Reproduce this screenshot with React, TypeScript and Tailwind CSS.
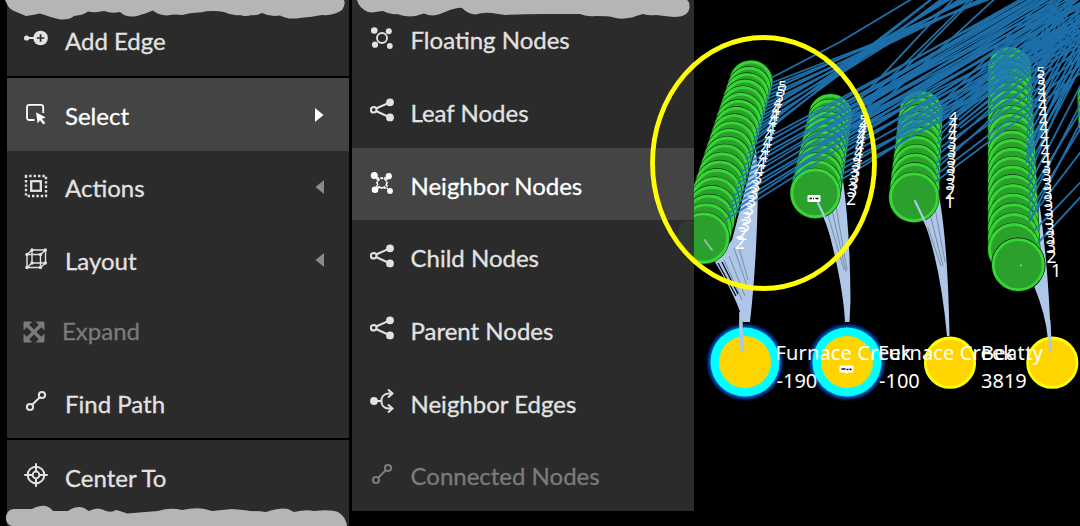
import React from "react";

type IconName =
  | "addEdge" | "select" | "actions" | "layout" | "expand" | "path" | "target"
  | "floating" | "share" | "neighbor" | "edges";

function Icon({ name }: { name: IconName }) {
  const line = { fill: "none", stroke: "currentColor", strokeWidth: 2 };
  const dot = (x: number, y: number, r: number) => <circle cx={x} cy={y} r={r} fill="currentColor" />;
  return (
    <svg viewBox="0 0 24 24" className="size-6 shrink-0">
      {name === "addEdge" && (
        <g>
          {dot(2.6, 12, 2.6)}
          <path d="M2 12h10" {...line} />
          {dot(16.6, 12, 7.3)}
          <path d="M16.600 8.300v7.400M12.900 12h7.400" stroke="#2b2b2b" strokeWidth="1.700" />
        </g>
      )}
      {name === "select" && (
        <g>
          <path d="M10.500 19H5.200A2.200 2.200 0 0 1 3 16.800V6a2.200 2.200 0 0 1 2.200-2.200H17A2.200 2.200 0 0 1 19.200 6v6" {...line} strokeWidth="1.800" />
          <path d="M12 11.200l9.800 5.300-4 1.300 3.500 4.100-1.900 1.600-3.400-4.200-2.300 3.100z" fill="currentColor" />
        </g>
      )}
      {name === "actions" && (
        <g>
          <rect x="2" y="2" width="20" height="20" {...line} strokeWidth="2.400" strokeDasharray="2.400 2" strokeDashoffset="1.200" />
          <rect x="7.200" y="7.200" width="9.600" height="9.600" {...line} strokeWidth="2.300" />
        </g>
      )}
      {name === "layout" && (
        <g>
          <path d="M3 7.500h13.500v13H3zM8 3h13.500v13H8zM3 7.500L8 3M16.500 7.500l5-4.500M3 20.500L8 16M16.500 20.500l5-4.500" {...line} strokeWidth="1.400" />
          {[[3, 7.5], [16.5, 7.5], [3, 20.5], [16.5, 20.5], [8, 3], [21.3, 3], [21.3, 16], [8, 16]].map(([x, y]) => (
            <circle key={`${x}-${y}`} cx={x} cy={y} r="1.700" fill="currentColor" />
          ))}
        </g>
      )}
      {name === "expand" && (
        <g>
          <path d="M5 5l14 14M19 5L5 19" {...line} strokeWidth="3.200" />
          <path d="M2 2h7.500L2 9.500zM22 2v7.500L14.500 2zM2 22v-7.500l7.500 7.500zM22 22h-7.500l7.500-7.500z" fill="currentColor" stroke="currentColor" strokeWidth="1" strokeLinejoin="round" />
        </g>
      )}
      {name === "path" && (
        <g {...line}>
          <circle cx="6" cy="18" r="3.100" />
          <circle cx="18" cy="6" r="3.100" />
          <path d="M8.200 15.800l7.600-7.600" />
        </g>
      )}
      {name === "target" && (
        <g {...line}>
          <circle cx="12" cy="12" r="8.300" />
          <circle cx="12" cy="12" r="3.400" />
          <path d="M12 .3v8.300M12 15.400v8.300M.3 12h8.300M15.400 12h8.300" />
        </g>
      )}
      {name === "floating" && (
        <g>
          {dot(4.3, 4.5, 3.3)}{dot(18.8, 5.2, 3)}{dot(5, 18.7, 3.1)}{dot(19.8, 20, 2.9)}
          <circle cx="12" cy="12" r="5" {...line} strokeWidth="1.900" />
        </g>
      )}
      {name === "neighbor" && (
        <g>
          {dot(4.3, 4.5, 3.5)}{dot(18.8, 5.2, 3.1)}{dot(5, 18.7, 3.3)}{dot(20, 20, 2.9)}
          <circle cx="12" cy="12" r="4.700" {...line} strokeWidth="1.500" strokeDasharray="3 1" />
          <path d="M6 6l3 3M17.500 6.500l-2 2M6.500 17.500l2-2M18 18l-2.500-2.500M7 7V17M17 7V17M7 7H17M7 17H17" {...line} strokeWidth="1.300" strokeDasharray="2 1.500" />
        </g>
      )}
      {name === "share" && (
        <g>
          <circle cx="3.700" cy="11.800" r="2.800" {...line} />
          <path d="M6 10.500L20 4.400M6 13L20 19.500" {...line} />
          {dot(20, 4.3, 3.9)}{dot(20, 19.4, 3.9)}
        </g>
      )}
      {name === "edges" && (
        <g>
          {dot(4, 12, 3.9)}
          <path d="M4 12h8M22 4.500h-3.500C9 5 9 19 18.500 19.500H22" {...line} />
          <path d="M18 .5l4.500 4L18 8.500M18 15.500l4.500 4-4.500 4" {...line} />
        </g>
      )}
    </svg>
  );
}

type Item = { label: string; icon: IconName; row: string; arrow?: "left" | "right" };

const mainItems: Item[] = [
  { label: "Add Edge", icon: "addEdge", row: "h-[73px] pl-[17px] bg-[#2b2b2b] text-[#e2e2e2]" },
  { label: "Select", icon: "select", row: "mt-[2px] h-[73px] pl-[17px] bg-[#444444] text-white", arrow: "right" },
  { label: "Actions", icon: "actions", row: "h-[72.7px] pl-[17px] bg-[#2b2b2b] text-[#e2e2e2]", arrow: "left" },
  { label: "Layout", icon: "layout", row: "h-[72.7px] pl-[17px] bg-[#2b2b2b] text-[#e2e2e2]", arrow: "left" },
  { label: "Expand", icon: "expand", row: "h-[69.6px] pl-[15px] bg-[#2b2b2b] text-[#7b7b7b]" },
  { label: "Find Path", icon: "path", row: "h-[72.5px] pl-[17px] pt-px bg-[#2b2b2b] text-[#e2e2e2]" },
  { label: "Center To", icon: "target", row: "mt-[2px] h-[73px] pl-[17px] bg-[#2b2b2b] text-[#e2e2e2]" },
];

const nodeItems: Item[] = [
  { label: "Floating Nodes", icon: "floating", row: "text-[#e2e2e2]" },
  { label: "Leaf Nodes", icon: "share", row: "text-[#e2e2e2]" },
  { label: "Neighbor Nodes", icon: "neighbor", row: "bg-[#444444] text-white" },
  { label: "Child Nodes", icon: "share", row: "text-[#e2e2e2]" },
  { label: "Parent Nodes", icon: "share", row: "text-[#e2e2e2]" },
  { label: "Neighbor Edges", icon: "edges", row: "text-[#e2e2e2]" },
  { label: "Connected Nodes", icon: "path", row: "text-[#7b7b7b]" },
];

function MainRow({ item }: { item: Item }) {
  const muted = item.icon === "expand";
  return (
    <div className={`flex shrink-0 items-center pr-[25px] ${item.row}`}>
      <div className={muted ? "pt-px" : "pb-[3px]"}><Icon name={item.icon} /></div>
      <span className={muted ? "ml-4 flex-1" : "ml-[17px] flex-1 pt-[2px]"}>{item.label}</span>
      {item.arrow && (
        <svg viewBox="0 0 9 16" className={item.arrow === "right" ? "h-4 w-[9px] text-white" : "h-4 w-[9px] text-[#8a8a8a]"}>
          <path d={item.arrow === "right" ? "M0 1l8.500 7L0 15z" : "M9 1L.5 8 9 15z"} fill="currentColor" />
        </svg>
      )}
    </div>
  );
}

const mix = (a: number, b: number, t: number) => a + (b - a) * t;
const ease = (t: number) => t * 0.8 + t * t * 0.2;

type Stack = { n: number; from: [number, number, number]; to: [number, number, number] };
const stacks: Stack[] = [
  { n: 21, from: [751, 82, 20], to: [703.5, 238, 24.2] },
  { n: 12, from: [830.5, 115.5, 20], to: [815.3, 193.3, 23.5] },
  { n: 11, from: [921, 112.5, 20], to: [914, 197.3, 23.5] },
  { n: 22, from: [1009.5, 68.5, 20], to: [1014, 249, 24.5] },
  { n: 5, from: [1099, 98, 20], to: [1101, 122, 21] },
];

function GreenStack({ n, from, to }: Stack) {
  return (
    <g>
      {Array.from({ length: n }, (_, i) => {
        const e = ease(i / (n - 1));
        const [x, y, r] = [mix(from[0], to[0], e), mix(from[1], to[1], e), mix(from[2], to[2], e)];
        return (
          <g key={i}>
            <circle cx={x} cy={y} r={r + 2.1} fill="#0c340c" />
            <circle cx={x} cy={y} r={r} fill="#2ca02c" stroke="#37d637" strokeWidth="3" />
          </g>
        );
      })}
    </g>
  );
}

type Fan = { n: number; a: [number, number]; b: [number, number]; c: [number, number]; d: [number, number] };
const fans: Fan[] = [
  { n: 15, a: [771, 83], b: [753, 142], c: [1003, -6], d: [938, -6] },
  { n: 13, a: [750, 147], b: [725, 220], c: [1030, -6], d: [1085, -6] },
  { n: 4, a: [852, 108], b: [852, 130], c: [958, -6], d: [1000, -6] },
  { n: 8, a: [840, 105], b: [815, 150], c: [1025, -4], d: [1090, 2] },
  { n: 15, a: [850, 103], b: [839, 181], c: [1042, -6], d: [1090, 40] },
  { n: 13, a: [940, 105], b: [935, 182], c: [1050, -6], d: [1090, 66] },
  { n: 9, a: [898, 118], b: [896, 140], c: [1090, -4], d: [1090, 30] },
  { n: 18, a: [1028, 60], b: [1026, 163], c: [1062, -6], d: [1125, -6] },
  { n: 9, a: [1028, 150], b: [1029, 222], c: [1085, 20], d: [1115, 76] },
  { n: 3, a: [1029, 220], b: [1037, 244], c: [1120, 100], d: [1120, 160] },
  { n: 8, a: [955, 100], b: [960, 128], c: [1085, -6], d: [1100, 20] },
];

const digitsFor = (counts: [string, number][]) => counts.flatMap(([d, k]) => Array.from({ length: k }, () => d));
const labelRuns: { digits: string[]; from: [number, number]; to: [number, number] }[] = [
  { digits: digitsFor([["5", 3], ["4", 11], ["3", 7], ["2", 2]]), from: [778.3, 90.5], to: [735, 249] },
  { digits: digitsFor([["5", 1], ["4", 7], ["3", 5], ["2", 1]]), from: [859.5, 125], to: [846, 204.5] },
  { digits: digitsFor([["4", 4], ["3", 6], ["2", 1], ["1", 1]]), from: [949, 122], to: [944.5, 208] },
  { digits: digitsFor([["5", 3], ["4", 10], ["3", 10], ["2", 1]]), from: [1036.5, 77], to: [1046.5, 263] },
];

function Graph() {
  return (
    <svg viewBox="694 0 386 526" className="h-full w-[386px] shrink-0" fontFamily='"Noto Sans", "Open Sans", sans-serif'>
      <defs>
        <radialGradient id="halo">
          <stop offset="0.840" stopColor="#0090ff" />
          <stop offset="1" stopColor="#0040ff" stopOpacity="0" />
        </radialGradient>
      </defs>
      <g fill="#aec7e8">
        <path d="M756 148L758 185Q757 260 750 322H743Q738 300 715 262L732 240Z" />
        <path d="M843 180Q850 230 850.500 300L849.500 322H845Q843 280 822 206Z" />
        <path d="M939 195Q948 245 949.500 336H947Q940 260 922 216L932 212Z" />
        <path d="M1039 200Q1046 250 1049 300L1051 340H1048Q1046 315 1034 286Z" />
      </g>
      <g stroke="#66758a" strokeWidth="0.700" fill="none">
        <path d="M724 260L742 300M729 256L745 296M734 248L747 286M738 244L748 280M827 212L844 270M832 210L846 272M836 206L847 270M924 216L941 266M930 214L943 266M935 208L945 262" />
      </g>
      <path d="M718 263L736 296M722 262L738 294" stroke="#0a0d12" strokeWidth="1.300" fill="none" />
      {stacks.map((s, i) => <GreenStack key={i} {...s} />)}
      <circle cx="1018.300" cy="264.700" r="27.200" fill="#0c240c" />
      <circle cx="1018.300" cy="264.700" r="25" fill="#2ca02c" stroke="#37d637" strokeWidth="2.800" />
      <g stroke="#2079b8" strokeWidth="1.850" opacity="0.920">
        {fans.map((f, k) =>
          Array.from({ length: f.n }, (_, i) => {
            const t = i / (f.n - 1);
            const w = Math.min(1, Math.max(0, t + (((i * 7 + k * 3) % 5) - 2) * 0.09));
            return (
              <line key={`${k}-${i}`} x1={mix(f.a[0], f.b[0], t)} y1={mix(f.a[1], f.b[1], t)} x2={mix(f.c[0], f.d[0], w)} y2={mix(f.c[1], f.d[1], w)} />
            );
          })
        )}
        <path d="M771 78L840 42L915 -3" fill="none" />
      </g>
      <g stroke="#aec7e8" strokeLinecap="round" fill="none">
        <path d="M704.500 240L712 250" stroke="#96bfa8" strokeWidth="2" />
        <path d="M818 203Q828 222 834 246M915 201L927 226" strokeWidth="2.200" />
        <path d="M1020.500 265.500l.5-.5" strokeWidth="1.500" />
      </g>
      {[745, 847].map((x) => (
        <g key={x}>
          <circle cx={x} cy="362" r="39.500" fill="url(#halo)" />
          <circle cx={x} cy="362" r="34.500" fill="#00ffff" />
          <circle cx={x} cy="362" r="26" fill="#ffd500" />
        </g>
      ))}
      {[950, 1052.3].map((x) => (
        <circle key={x} cx={x} cy="362.700" r="24.700" fill="#ffd500" stroke="#ffff00" strokeWidth="2.800" />
      ))}
      <g stroke="#aec7e8" fill="none">
        <path d="M741 312Q740.500 338 742.700 352" strokeWidth="3.600" />
        <path d="M1049 320Q1050 336 1050.300 352" strokeWidth="2.800" />
      </g>
      <g fill="#fff">
        <rect x="807.500" y="195" width="13" height="7" rx="1" />
        <rect x="839.500" y="365.500" width="14" height="7" rx="1.500" />
        <path d="M845 372h4l-2 2z" />
      </g>
      <path d="M809.500 198.500h2.500M813 198.500h1M815.500 198.500h3M841.500 369h4M846.500 369.500h2M849.500 369l2 .8" stroke="#111" strokeWidth="1.600" />
      <g fill="#fff">
        {labelRuns.map((run, k) =>
          run.digits.map((d, i) => {
            const e = ease(i / (run.digits.length - 1));
            return (
              <text key={`${k}-${i}`} x={mix(run.from[0], run.to[0], e)} y={mix(run.from[1], run.to[1], e)} fontSize={mix(15, 17.5, e)}>{d}</text>
            );
          })
        )}
        <text x="1051" y="276.500" fontSize="18">1</text>
      </g>
      <g fill="#fff" fontSize="20">
        <text x="775.500" y="360" textLength="136">Furnace Creek</text>
        <text x="776.500" y="388">-190</text>
        <text x="878" y="360" textLength="136">Furnace Creek</text>
        <text x="879" y="388">-100</text>
        <text x="981" y="360" textLength="62">Beatty</text>
        <text x="981" y="388">3819</text>
      </g>
    </svg>
  );
}

function Marks() {
  return (
    <svg viewBox="0 0 1080 526" className="pointer-events-none absolute inset-0 size-full">
      <g fill="#b5b5b5">
        <path d="M5 0L7 4Q9 9 14 11L26 16Q32 15 40 13.500Q50 17 60 19.500Q70 20 74 16Q84 15 88 11.500Q96 13 104 11Q112 14 120 12Q126 18 137 16Q147 13 153 10.500Q158 15 167 15.500Q175 14 182 15Q192 12 200 12.500Q212 10 224 12Q232 16 240 15Q245 17 252 15Q256 16 262 13Q270 17 280 15.500Q288 20 300 18Q312 17 322 15Q334 16 342 10Q346 4 344 0Z" />
        <path d="M12 526Q5 524 6 516Q8 509 14 509L32 509Q40 505 46 506Q51 508 53 511Q62 511 68 511Q76 505 84 508Q87 510 89 511Q98 506 106 511Q112 513 116 510Q124 512 127 513.500L158 511Q170 507 182 510Q200 506 212 511Q222 510 232 509Q245 510 250 511Q258 511 266 512Q280 507 288 509Q292 511 294 512Q306 509 314 511Q330 509 338 512Q346 517 347 526Z" />
        <path d="M357 0Q359 8 368 12L373 12.500Q379 11 383 11Q390 15 397 14Q410 19 424 13.500Q432 17 440 14L450 10Q460 7 462 8Q468 14 476 14.500Q482 12 492 13L505 15Q525 14 545 14L580 14Q588 17 596 16Q608 16 612 17Q620 20 632 17.500Q638 15 643 14Q650 16 656 15Q664 16 674 17Q688 17 689.500 8Q690 2 687 0Z" />
      </g>
      <path d="M694 221V261Q677 255 677 238Q678 226 684 221Z" fill="#2f3b2f" />
      <ellipse cx="763.500" cy="163" rx="111" ry="125.500" fill="none" stroke="#ffff00" strokeWidth="4.800" />
    </svg>
  );
}

export default function App() {
  return (
    <main className="relative flex h-[526px] w-[1080px] overflow-hidden bg-black font-['Lato',sans-serif] text-[24px] leading-none">
      <nav className="ml-[7px] flex w-[342px] shrink-0 flex-col [-webkit-text-stroke:0.3px_currentColor]">
        <div className="h-[3px] shrink-0 bg-[#2b2b2b]" />
        {mainItems.map((item) => <MainRow key={item.label} item={item} />)}
        <div className="flex-1 bg-[#2b2b2b]" />
      </nav>
      <nav className="ml-[3px] flex h-[511px] w-[342px] shrink-0 flex-col bg-[#2b2b2b] pt-[2.5px] [-webkit-text-stroke:0.3px_currentColor]">
        {nodeItems.map((item) => (
          <div key={item.label} className={`flex h-[72.65px] shrink-0 items-center pl-[17.5px] ${item.row}`}>
            <div className="pb-[2px]"><Icon name={item.icon} /></div>
            <span className="ml-[17px] pt-[3px]">{item.label}</span>
          </div>
        ))}
      </nav>
      <Graph />
      <Marks />
    </main>
  );
}
